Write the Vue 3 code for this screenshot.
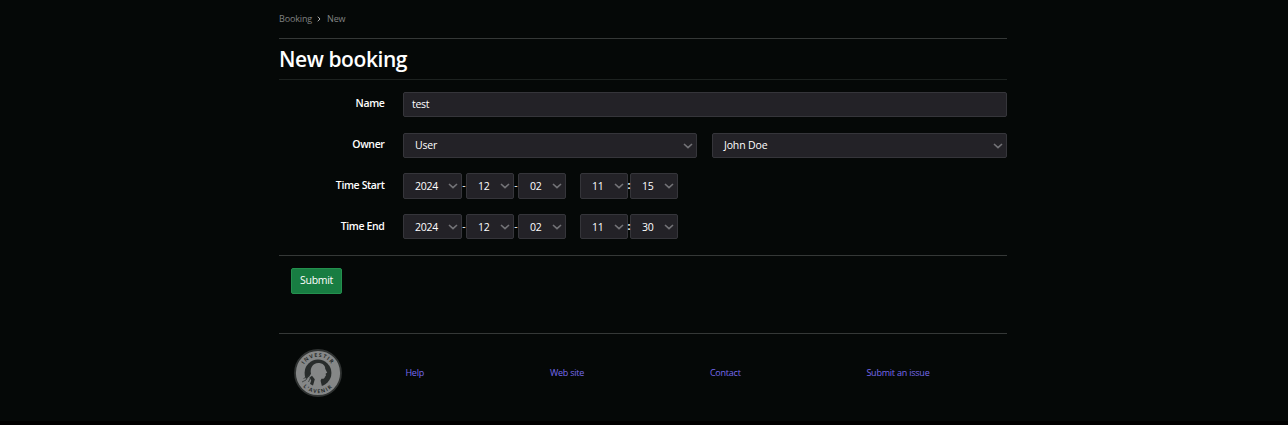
<script setup>
const times = [
  { label: 'Time Start', values: ['2024', '12', '02', '11', '15'] },
  { label: 'Time End', values: ['2024', '12', '02', '11', '30'] },
]
const separators = ['-', '-', '', ':']
const owners = ['User', 'John Doe']
</script>

<template>
  <div class="page">
    <main class="container">
      <nav class="crumbs">
        <span class="crumb-link">Booking</span>
        <svg class="crumb-arrow" viewBox="0 0 4 6"><path d="M.8 .7 3 3 .8 5.3" /></svg>
        <span>New</span>
      </nav>
      <h1>New booking</h1>
      <form @submit.prevent>
        <div class="row">
          <label>Name</label>
          <div class="control input">test</div>
        </div>
        <div class="row owner-row">
          <label>Owner</label>
          <div class="owners">
            <div v-for="o in owners" :key="o" class="control select">
              <span>{{ o }}</span>
              <svg class="chevron" viewBox="0 0 10 6"><path d="M1 1l4 3.7L9 1" /></svg>
            </div>
          </div>
        </div>
        <div v-for="(t, r) in times" :key="t.label" class="row time-row" :class="'time' + r">
          <label>{{ t.label }}</label>
          <div class="time">
            <template v-for="(v, i) in t.values" :key="i">
              <div class="control select" :class="{ year: i === 0 }">
                <span>{{ v }}</span>
                <svg class="chevron" viewBox="0 0 10 6"><path d="M1 1l4 3.7L9 1" /></svg>
              </div>
              <span v-if="i < 4" class="sep" :class="'sep' + i">{{ separators[i] }}</span>
            </template>
          </div>
        </div>
        <div class="actions"><button>Submit</button></div>
      </form>
      <footer>
        <svg class="logo" viewBox="0 0 48 48">
          <defs>
            <path id="arc-top" d="M7.800 24a16.200 16.200 0 0 1 32.400 0" />
            <path id="arc-bottom" d="M3.900 24a20.100 20.100 0 0 0 40.200 0" />
          </defs>
          <circle cx="24" cy="24" r="23" fill="#858787" stroke="#303332" stroke-width="1.8" />
          <circle cx="24" cy="24" r="13.4" fill="#282c2b" />
          <path
            fill="#858787"
            d="M18 17.500c1.500-2.800 5-4.300 8.500-3.300 3.300.8 5 3 4.700 5.600l2 3.900-1.500.7.2 2.300-1 1.100c-.2 1.900-1.600 2.200-3.500 1.900l-.8 2.100 1.500 6.200h-9.500l2.200-7.800-2.800-3.400-2.500 1.600 1.700 3.200-1.200 3.400-7.500.5 3.200-5.200 3.600-2.800 1.700-2.800c-.7-2.700-.2-5.200 1-7.200z"
          />
          <path class="wing" d="M14.500 26.500l-2.500 4.500-4 2M12.500 28l-3 1.500M16.500 28.500l-2 4.500" />
          <g class="motto">
            <text><textPath href="#arc-top" startOffset="50%">INVESTIR</textPath></text>
            <text><textPath href="#arc-bottom" startOffset="50%">L'AVENIR</textPath></text>
          </g>
        </svg>
        <a class="help">Help</a>
        <a class="site">Web site</a>
        <a class="contact">Contact</a>
        <a class="issue">Submit an issue</a>
      </footer>
    </main>
  </div>
</template>

<style>
body { background: #050807; }
</style>

<style scoped>
* { box-sizing: border-box; }
.page {
  height: 425px;
  overflow: hidden;
  background: #050807;
  border-bottom: 4px solid #000;
  color: #fff;
  font: 10.5px/16px "Open Sans", "Noto Sans", sans-serif;
  letter-spacing: -0.25px;
}
.container { width: 728px; margin-left: 279px; }
.crumbs {
  display: flex;
  align-items: center;
  height: 39px;
  border-bottom: 1px solid #353837;
  color: #808282;
  font-size: 9px;
  letter-spacing: -0.15px;
}
.crumb-link { width: 38px; }
.crumb-arrow { width: 4px; height: 6px; margin-right: 6px; fill: none; stroke: #b0b2b2; }
h1 {
  height: 41px;
  margin: 0;
  border-bottom: 1px solid #1d2220;
  font-size: 21px;
  font-weight: 600;
  line-height: 41px;
  letter-spacing: -0.42px;
}
form { height: 254px; padding-top: 12px; border-bottom: 1px solid #353837; }
.row { display: flex; height: 41px; }
.owner-row { height: 40px; }
label {
  width: 124px;
  padding: 3px 18.500px 0 0;
  font-weight: 600;
  text-align: right;
  letter-spacing: -0.37px;
}
.time-row label { padding-top: 4px; }
.control {
  height: 25px;
  border: 1px solid #35353a;
  border-radius: 2px;
  background: #232227;
  line-height: 23px;
}
.input { width: 604px; padding-left: 8px; letter-spacing: -0.3px; }
.owners { display: grid; grid-template-columns: 294px 295px; gap: 15px; }
.owners .control { letter-spacing: -0.15px; }
.select { display: flex; align-items: center; justify-content: space-between; padding: 0 3px 0 11px; }
.chevron { width: 10px; height: 6px; fill: none; stroke: #737377; stroke-width: 1.6; }
.time { display: flex; }
.time .control { width: 48px; }
.time .control.year { width: 59px; }
.time0 .control { height: 26px; line-height: 24px; }
.time1 .control { line-height: 24px; padding-top: 1px; }
.sep { width: 4px; line-height: 25px; text-align: center; letter-spacing: 0; }
.sep2 { width: 14px; }
.sep3 { z-index: 1; width: 2px; display: flex; justify-content: center; font-weight: 700; }
.actions { height: 78px; border-top: 1px solid #353837; padding: 12px; }
button {
  display: block;
  width: 51px;
  height: 26px;
  padding: 0 0 2px;
  border: 1px solid #24904e;
  border-radius: 2px;
  background: #187d42;
  color: #fff;
  font: inherit;
  letter-spacing: -0.3px;
}
footer {
  display: flex;
  align-items: center;
  height: 78px;
  padding-left: 15px;
  color: #766aec;
  font-size: 9px;
  letter-spacing: -0.22px;
}
.logo { width: 48px; height: 48px; margin-right: 63.400px; }
.wing { fill: none; stroke: #343837; stroke-width: .8; }
.motto { fill: #272b2a; font: 700 5.2px "Open Sans", sans-serif; letter-spacing: 1.2px; text-anchor: middle; }
.help { width: 144.5px; }
.site { width: 160px; }
.contact { width: 156.5px; }
</style>
